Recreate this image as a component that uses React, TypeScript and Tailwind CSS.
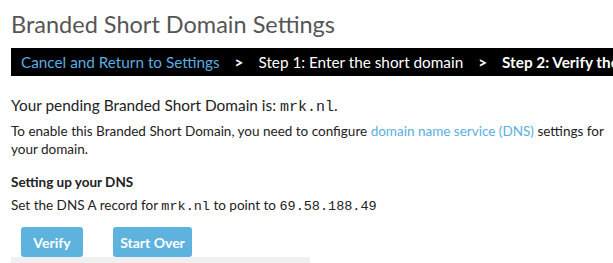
export default function App() {
  return (
    <div className="w-[613px] h-[263px] overflow-hidden bg-white font-['Lato','Liberation_Sans',sans-serif]">
      <h1 className="pl-[11px] pt-[10px] text-[23.5px] leading-[28px] text-[#555] font-normal whitespace-nowrap">
        Branded Short Domain Settings
      </h1>

      <div className="ml-[11px] mt-[10px] h-[28px] bg-black flex items-center pl-[10px] text-[15.3px] whitespace-nowrap">
        <a href="#" className="text-[#5aaee0]">Cancel and Return to Settings</a>
        <span className="text-white font-bold px-[15px]">&gt;</span>
        <span className="text-white">Step 1: Enter the short domain</span>
        <span className="text-white font-bold px-[15px]">&gt;</span>
        <span className="text-white font-bold">Step 2: Verify the short domain</span>
      </div>

      <div className="pl-[11px] pt-[19px] text-[#222]">
        <p className="text-[15.4px] leading-[20px]">
          Your pending Branded Short Domain is:{" "}
          <span className="font-['Liberation_Mono',monospace] text-[15px]">mrk.nl</span>.
        </p>
        <p className="mt-[4px] text-[13.5px] leading-[18px] w-[595px]">
          To enable this Branded Short Domain, you need to configure{" "}
          <a href="#" className="text-[#5aaee0]">domain name service (DNS)</a> settings for your domain.
        </p>

        <h2 className="mt-[15px] text-[13.5px] leading-[19px] font-bold">Setting up your DNS</h2>
        <p className="mt-[4px] text-[13.5px] leading-[19px]">
          Set the DNS A record for <span className="font-['Liberation_Mono',monospace] text-[13.5px]">mrk.nl</span> to point to{" "}
          <span className="font-['Liberation_Mono',monospace] text-[13.5px]">69.58.188.49</span>
        </p>

        <div className="mt-[11px] flex gap-[30px] pl-[10px]">
          <button className="h-[30px] w-[62px] rounded-[3px] bg-[#5eb2de] text-white font-bold text-[14px]">
            Verify
          </button>
          <button className="h-[30px] w-[79px] rounded-[3px] bg-[#5eb2de] text-white font-bold text-[14px]">
            Start Over
          </button>
        </div>
        <div className="h-[6px] w-[299px] bg-[#f0f0f0]" />
      </div>
    </div>
  );
}
